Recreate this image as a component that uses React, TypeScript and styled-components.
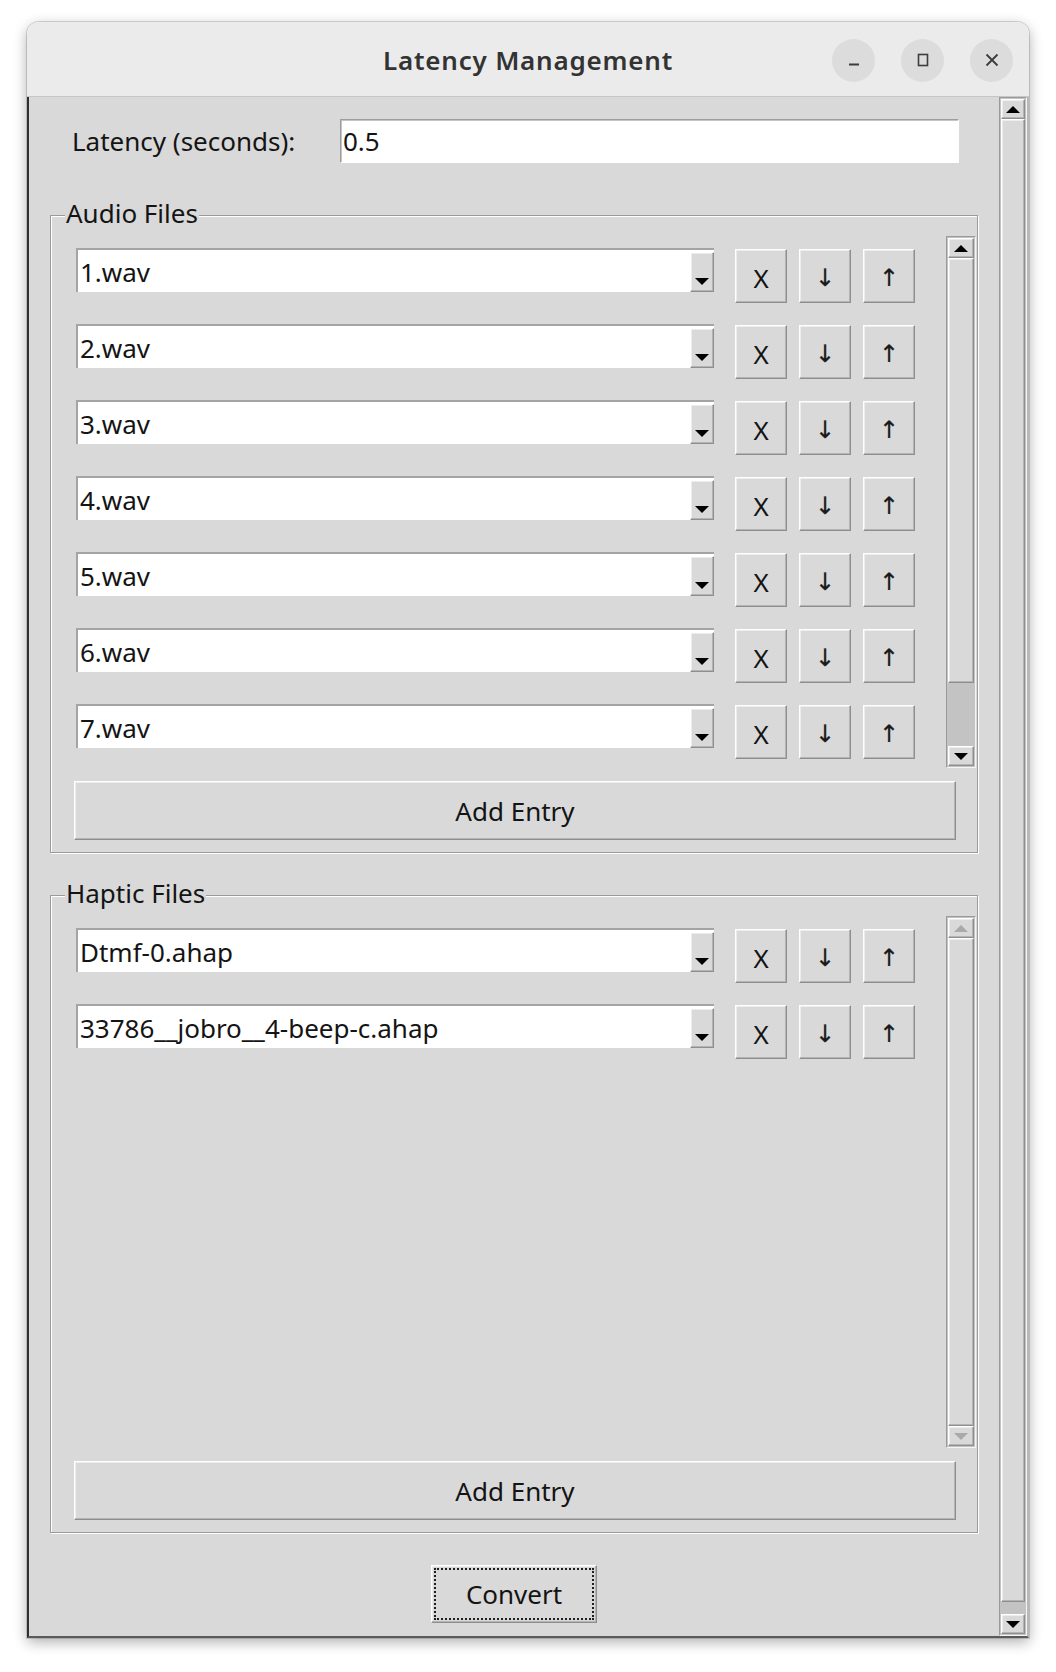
import React from 'react';
import styled, { createGlobalStyle, css } from 'styled-components';

const GlobalStyle = createGlobalStyle`
  html, body { margin: 0; padding: 0; background: #ffffff; }
  body {
    font-family: "Noto Sans", "DejaVu Sans", sans-serif;
    color: #141414;
    width: 1056px;
    height: 1672px;
    overflow: hidden;
  }
  * { box-sizing: border-box; }
`;

const DARK = '#8e8e8e';
const LIGHT = '#ffffff';
const BG = '#d9d9d9';

const raised = css`
  background: ${BG};
  border: 1px solid;
  border-color: ${LIGHT} ${DARK} ${DARK} ${LIGHT};
  box-shadow: inset -1px -1px 0 #b4b4b4, inset 1px 1px 0 #ededed;
`;

const sunken = css`
  border: 1px solid;
  border-color: #9c9c9c ${LIGHT} ${LIGHT} #9c9c9c;
  box-shadow: inset 1px 1px 0 #c4c4c4;
`;

const Stage = styled.div`
  padding: 22px 27px 0 27px;
`;

const Window = styled.div`
  width: 1002px;
  height: 1616px;
  display: flex;
  flex-direction: column;
  border-radius: 12px 12px 0 0;
  box-shadow: 0 4px 14px rgba(0, 0, 0, 0.32), 0 0 0 1px rgba(0, 0, 0, 0.14);
  overflow: hidden;
`;

const TitleBar = styled.div`
  flex: none;
  height: 75px;
  background: #ebebeb;
  border-bottom: 1px solid #c6c6c6;
  display: grid;
  grid-template-columns: 1fr auto 1fr;
  align-items: center;
`;

const Title = styled.div`
  grid-column: 2;
  font-family: "Noto Sans", sans-serif;
  font-weight: 600;
  font-size: 26px;
  letter-spacing: 0.8px;
  color: #333333;
  padding-top: 1px;
`;

const Controls = styled.div`
  grid-column: 3;
  justify-self: end;
  display: flex;
  gap: 26px;
  padding-right: 16px;
  padding-top: 2px;
`;

const CtrlButton = styled.div`
  width: 43px;
  height: 43px;
  border-radius: 50%;
  background: #dcdcdc;
  display: flex;
  align-items: center;
  justify-content: center;
`;

const Body = styled.div`
  flex: 1;
  display: flex;
  background: ${BG};
  border-left: 2px solid #2f2f2f;
  border-right: 2px solid #b8b8b8;
  border-bottom: 2px solid #5a5a5a;
  min-height: 0;
`;

const Main = styled.div`
  flex: 1;
  display: flex;
  flex-direction: column;
  padding: 22px 21px 0 21px;
`;

const LatencyRow = styled.div`
  display: flex;
  align-items: center;
  height: 44px;
  padding-left: 22px;
  padding-right: 19px;
`;

const Label = styled.div`
  width: 268px;
  font-size: 26px;
  line-height: 34px;
`;

const Entry = styled.div`
  flex: 1;
  height: 44px;
  background: #ffffff;
  ${sunken};
  display: flex;
  align-items: center;
  padding-left: 2px;
  font-size: 26px;
`;

const Group = styled.section<{ $top: number }>`
  position: relative;
  margin-top: ${p => p.$top}px;
  border: 1px solid #9a9a9a;
  box-shadow: inset 1px 1px 0 ${LIGHT}, 1px 1px 0 ${LIGHT};
  padding: 20px 1px 12px 25px;
`;

const Legend = styled.div`
  position: absolute;
  top: -20px;
  left: 14px;
  padding: 0 1px;
  background: ${BG};
  font-size: 26px;
  line-height: 34px;
`;

const ListArea = styled.div`
  display: flex;
  height: 532px;
`;

const Rows = styled.div`
  flex: 1;
  display: flex;
  flex-direction: column;
  gap: 22px;
  padding-top: 12px;
`;

const Row = styled.div`
  display: flex;
  align-items: flex-start;
  height: 54px;
`;

const Combo = styled.div`
  width: 638px;
  height: 44px;
  display: flex;
  background: #ffffff;
  border-top: 2px solid #a4a4a4;
  border-left: 2px solid #a4a4a4;
  margin-right: 21px;
`;

const ComboText = styled.div`
  flex: 1;
  font-size: 26px;
  line-height: 44px;
  padding-left: 2px;
  white-space: nowrap;
  overflow: hidden;
`;

const ComboArrow = styled.div`
  width: 24px;
  margin-top: 2px;
  ${raised};
  display: flex;
  align-items: flex-end;
  justify-content: center;
  padding-bottom: 6px;
`;

const Triangle = styled.div<{ $dir: 'up' | 'down'; $dim?: boolean }>`
  width: 0;
  height: 0;
  border-left: 7px solid transparent;
  border-right: 7px solid transparent;
  ${p =>
    p.$dir === 'down'
      ? css`border-top: 7px solid ${p.$dim ? '#a9a9a9' : '#000'};`
      : css`border-bottom: 7px solid ${p.$dim ? '#a9a9a9' : '#000'};`}
`;

const Buttons = styled.div`
  display: flex;
  gap: 12px;
  margin-top: 1px;
`;

const SmallButton = styled.div`
  width: 52px;
  height: 54px;
  ${raised};
  display: flex;
  align-items: center;
  justify-content: center;
  font-size: 26px;
  line-height: 1;
  padding-top: 3px;
`;

const ArrowGlyph = styled.span`
  font-family: "DejaVu Sans", sans-serif;
  font-size: 24px;
  color: #1a1a1a;
  -webkit-text-stroke: 0.2px #1a1a1a;
`;

const WideButton = styled.div`
  height: 59px;
  margin: 13px 20px 0 -2px;
  ${raised};
  display: flex;
  align-items: center;
  justify-content: center;
  font-size: 26px;
`;

const ConvertButton = styled.div`
  align-self: center;
  margin-top: 32px;
  width: 166px;
  height: 58px;
  ${raised};
  outline: 2px dotted #1e1e1e;
  outline-offset: -5px;
  display: flex;
  align-items: center;
  justify-content: center;
  font-size: 26px;
`;

/* Scrollbar */
const Track = styled.div<{ $w: number }>`
  width: ${p => p.$w}px;
  flex: none;
  display: flex;
  flex-direction: column;
  background: #c3c3c3;
  border: 1px solid;
  border-color: #9a9a9a #f4f4f4 #f4f4f4 #9a9a9a;
  padding: 1px;
`;

const ScrollArrow = styled.div`
  flex: none;
  height: 20px;
  ${raised};
  display: flex;
  align-items: center;
  justify-content: center;
`;

const Thumb = styled.div<{ $size?: number }>`
  ${p => (p.$size ? css`flex: none; height: ${p.$size}px;` : css`flex: 1;`)}
  ${raised};
`;

const Trough = styled.div<{ $size?: number }>`
  ${p => (p.$size ? css`flex: none; height: ${p.$size}px;` : css`flex: 1;`)}
`;

function Scrollbar({
  width,
  thumb,
  trough,
  dim,
}: {
  width: number;
  thumb?: number;
  trough?: number;
  dim?: boolean;
}) {
  return (
    <Track $w={width}>
      <ScrollArrow>
        <Triangle $dir="up" $dim={dim} />
      </ScrollArrow>
      <Thumb $size={thumb} />
      {trough !== undefined && <Trough $size={trough || undefined} />}
      <ScrollArrow>
        <Triangle $dir="down" $dim={dim} />
      </ScrollArrow>
    </Track>
  );
}

function FileRow({ name }: { name: string }) {
  return (
    <Row>
      <Combo>
        <ComboText>{name}</ComboText>
        <ComboArrow>
          <Triangle $dir="down" />
        </ComboArrow>
      </Combo>
      <Buttons>
        <SmallButton>X</SmallButton>
        <SmallButton>
          <ArrowGlyph>↓</ArrowGlyph>
        </SmallButton>
        <SmallButton>
          <ArrowGlyph>↑</ArrowGlyph>
        </SmallButton>
      </Buttons>
    </Row>
  );
}

function FileGroup({
  title,
  files,
  top,
  scroll,
}: {
  title: string;
  files: string[];
  top: number;
  scroll: React.ReactNode;
}) {
  return (
    <Group $top={top}>
      <Legend>{title}</Legend>
      <ListArea>
        <Rows>
          {files.map(f => (
            <FileRow key={f} name={f} />
          ))}
        </Rows>
        {scroll}
      </ListArea>
      <WideButton>Add Entry</WideButton>
    </Group>
  );
}

const audio = ['1.wav', '2.wav', '3.wav', '4.wav', '5.wav', '6.wav', '7.wav'];
const haptic = ['Dtmf-0.ahap', '33786__jobro__4-beep-c.ahap'];

export default function App() {
  return (
    <>
      <GlobalStyle />
      <Stage>
        <Window>
          <TitleBar>
            <Title>Latency Management</Title>
            <Controls>
              <CtrlButton>
                <svg width="16" height="16" viewBox="0 0 16 16">
                  <path d="M3 12.5h10" stroke="#3c3c3c" strokeWidth="1.8" />
                </svg>
              </CtrlButton>
              <CtrlButton>
                <svg width="16" height="16" viewBox="0 0 16 16">
                  <rect x="3.5" y="2.5" width="9" height="11" fill="none" stroke="#3c3c3c" strokeWidth="1.6" />
                </svg>
              </CtrlButton>
              <CtrlButton>
                <svg width="16" height="16" viewBox="0 0 16 16">
                  <path d="M2.5 2.5l11 11M13.5 2.5l-11 11" stroke="#3c3c3c" strokeWidth="1.8" />
                </svg>
              </CtrlButton>
            </Controls>
          </TitleBar>
          <Body>
            <Main>
              <LatencyRow>
                <Label>Latency (seconds):</Label>
                <Entry>0.5</Entry>
              </LatencyRow>
              <FileGroup
                title="Audio Files"
                files={audio}
                top={52}
                scroll={<Scrollbar width={30} thumb={425} trough={0} />}
              />
              <FileGroup
                title="Haptic Files"
                files={haptic}
                top={42}
                scroll={<Scrollbar width={30} dim />}
              />
              <ConvertButton>Convert</ConvertButton>
            </Main>
            <Scrollbar width={28} trough={12} />
          </Body>
        </Window>
      </Stage>
    </>
  );
}
